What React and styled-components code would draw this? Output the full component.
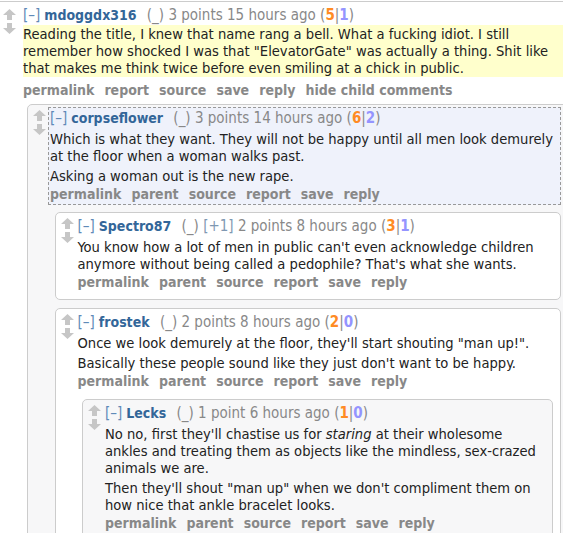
import React from 'react';
import styled, { createGlobalStyle } from 'styled-components';

const GlobalStyle = createGlobalStyle`
    body {
        margin: 0;
        background: #fff;
        overflow: hidden;
        font-family: "DejaVu Sans Condensed", "DejaVu Sans", Verdana, sans-serif;
    }
`

const Page = styled.div`
    width: 580px;
    margin-left: -3px;
    padding-top: 1px;
`

const Thing = styled.div`
    border: 1px solid #ccc;
    border-radius: ${props => props.$flat ? '0' : '5px'};
    background: ${props => props.$bg || '#fff'};
    padding: 2px 7px 6px 5px;
    margin-bottom: 8px;
`

const Row = styled.div`
    display: flex;
    align-items: flex-start;
`

const Midcol = styled.div`
    width: ${props => props.$wide ? '18px' : '15px'};
    flex: none;
    display: flex;
    flex-direction: column;
    gap: 3px;
    padding-top: ${props => props.$wide ? '5px' : '3px'};
`

const Entry = styled.div`
    flex: 1;
    min-width: 0;
    border: 1px ${props => props.$highlight ? 'dashed #999' : 'solid transparent'};
    background: ${props => props.$highlight ? '#eff2fb' : 'transparent'};
    padding-left: 1px;
`

const Tagline = styled.div`
    font-size: 15px;
    line-height: 20px;
    color: #888;
    white-space: nowrap;
`

const Expand = styled.span`
    color: #5f8ab8;
    margin-right: 4px;
`

const Author = styled.span`
    color: #369;
    font-weight: bold;
    font-size: 14px;
    margin-right: 6px;
`

const Flair = styled.span`
    color: #7f98b2;
`

const Up = styled.b`
    color: #ff8b24;
`

const Down = styled.b`
    color: #9494ff;
`

const Body = styled.div`
    font-size: 14.6px;
    line-height: 17px;
    color: #222;
    background: ${props => props.$bg || 'transparent'};
    margin-top: ${props => props.$bg ? '0' : '2px'};
    padding-bottom: ${props => props.$bg ? '1px' : '0'};
    p {
        margin: 0 0 3px;
    }
    p:last-child {
        margin-bottom: 0;
    }
`

const Buttons = styled.ul`
    list-style: none;
    margin: ${props => props.$top ? '3px' : '0'} 0 0;
    padding: 0;
    display: flex;
    gap: 10px;
    font-size: 14px;
    font-weight: bold;
    line-height: 20px;
    color: #888;
`

const Child = styled.div`
    margin-left: ${props => props.$indent}px;
    margin-top: ${props => props.$gap}px;
`

const Arrow = ({ down }) => (
    <svg width="13" height="11" viewBox="0 0 13 11">
        <path
            d="M6.5 0 L13 6 L9 6 L9 11 L4 11 L4 6 L0 6 Z"
            fill="#c6c6c6"
            transform={down ? 'rotate(180 6.5 5.5)' : undefined}
        />
    </svg>
);

const Comment = ({ c, first }) => (
    <Thing $bg={c.bg} $flat={first}>
        <Row>
            <Midcol $wide={first}>
                <Arrow />
                <Arrow down />
            </Midcol>
            <Entry $highlight={c.highlight}>
                <Tagline>
                    <Expand>[–]</Expand>
                    <Author>{c.author}</Author>
                    {' '}(_) {c.flair && <Flair>[+1] </Flair>}{c.points} {c.age} (<Up>{c.up}</Up>|<Down>{c.down}</Down>)
                </Tagline>
                <Body $bg={c.yellow ? '#ffffcc' : null}>
                    {c.body.map((p, i) => <p key={i}>{p}</p>)}
                </Body>
                <Buttons $top={c.yellow}>
                    {c.buttons.map(b => <li key={b}>{b}</li>)}
                </Buttons>
            </Entry>
        </Row>
        {c.children && (
            <Child $indent={first ? 24 : 21.5} $gap={first ? 3 : 7}>
                {c.children.map(k => <Comment key={k.author} c={k} />)}
            </Child>
        )}
    </Thing>
);

const childButtons = ['permalink', 'parent', 'source', 'report', 'save', 'reply'];

const thread = {
    author: 'mdoggdx316',
    points: '3 points',
    age: '15 hours ago',
    up: 5,
    down: 1,
    yellow: true,
    body: [
        'Reading the title, I knew that name rang a bell. What a fucking idiot. I still remember how shocked I was that "ElevatorGate" was actually a thing. Shit like that makes me think twice before even smiling at a chick in public.'
    ],
    buttons: ['permalink', 'report', 'source', 'save', 'reply', 'hide child comments'],
    children: [
        {
            author: 'corpseflower',
            points: '3 points',
            age: '14 hours ago',
            up: 6,
            down: 2,
            bg: '#f7f7f8',
            highlight: true,
            body: [
                'Which is what they want. They will not be happy until all men look demurely at the floor when a woman walks past.',
                'Asking a woman out is the new rape.'
            ],
            buttons: childButtons,
            children: [
                {
                    author: 'Spectro87',
                    flair: true,
                    points: '2 points',
                    age: '8 hours ago',
                    up: 3,
                    down: 1,
                    body: [
                        "You know how a lot of men in public can't even acknowledge children anymore without being called a pedophile? That's what she wants."
                    ],
                    buttons: childButtons
                },
                {
                    author: 'frostek',
                    points: '2 points',
                    age: '8 hours ago',
                    up: 2,
                    down: 0,
                    body: [
                        'Once we look demurely at the floor, they\'ll start shouting "man up!".',
                        "Basically these people sound like they just don't want to be happy."
                    ],
                    buttons: childButtons,
                    children: [
                        {
                            author: 'Lecks',
                            points: '1 point',
                            age: '6 hours ago',
                            up: 1,
                            down: 0,
                            bg: '#f7f7f8',
                            body: [
                                <>No no, first they'll chastise us for <em>staring</em> at their wholesome ankles and treating them as objects like the mindless, sex-crazed animals we are.</>,
                                'Then they\'ll shout "man up" when we don\'t compliment them on how nice that ankle bracelet looks.'
                            ],
                            buttons: childButtons
                        }
                    ]
                }
            ]
        }
    ]
};

export default function App() {
    return (
        <Page>
            <GlobalStyle />
            <Comment c={thread} first />
        </Page>
    );
}
